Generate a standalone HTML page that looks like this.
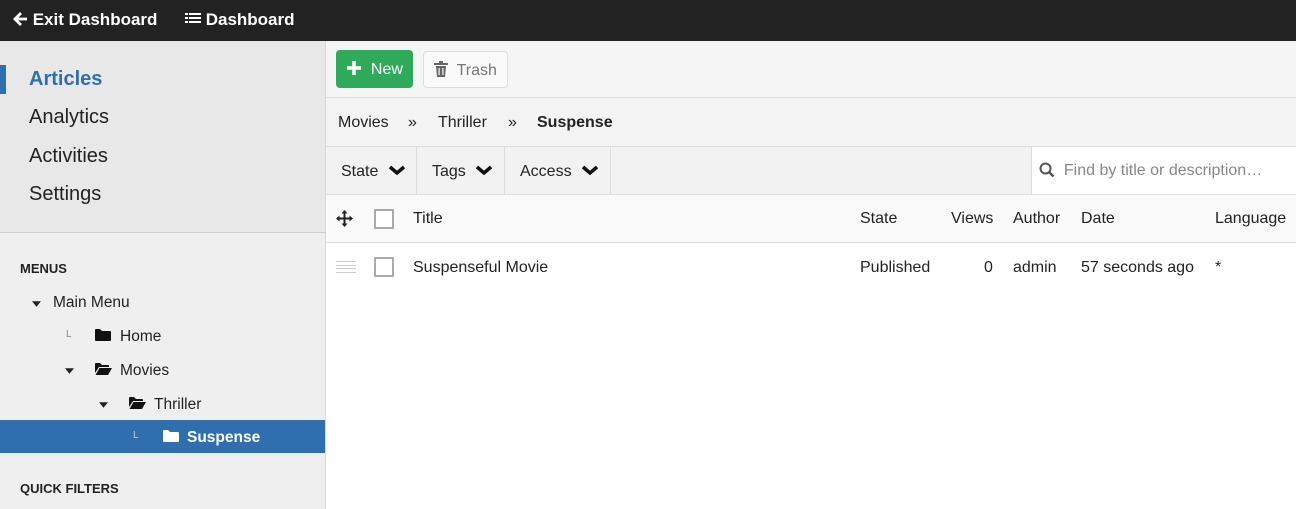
<!DOCTYPE html>
<html><head><style>
*{margin:0;padding:0;box-sizing:border-box}
body{width:1296px;height:509px;overflow:hidden;font-family:"Liberation Sans",Arial,sans-serif;color:#222;background:#fff;position:relative}
.a{position:absolute;white-space:nowrap}
.t{font-size:15.5px}
</style></head><body>
<div class="a" style="left:0;top:0;width:1296px;height:41px;background:#222"></div>
<div class="a" style="left:12px;top:10px;color:#fff;font-weight:bold;font-size:17px">
<svg width="16" height="16" viewBox="0 0 16 16" style="vertical-align:-2px"><path d="M8 1L1 8l7 7 2-2-3.6-3.6H15V6.6H6.4L10 3z" fill="#fff"/></svg> Exit Dashboard</div>
<div class="a" style="left:185px;top:10px;color:#fff;font-weight:bold;font-size:17px">
<svg width="16" height="14" viewBox="0 0 16 14" style="vertical-align:-1px"><g fill="#fff"><rect x="0" y="1" width="3" height="2"/><rect x="4" y="1" width="12" height="2"/><rect x="0" y="5" width="3" height="2"/><rect x="4" y="5" width="12" height="2"/><rect x="0" y="9" width="3" height="2"/><rect x="4" y="9" width="12" height="2"/></g></svg> Dashboard</div>

<svg width="0" height="0" style="position:absolute"><defs>
<symbol id="fc" viewBox="0 0 16 13"><path d="M0 2a1 1 0 0 1 1-1h4l2 2h8a1 1 0 0 1 1 1v8a1 1 0 0 1-1 1H1a1 1 0 0 1-1-1z"/></symbol>
<symbol id="fo" viewBox="0 0 17 13"><path d="M0 2a1 1 0 0 1 1-1h4l2 2h6a1 1 0 0 1 1 1v1H4L0 11zM4.5 6H17l-4 7H0.5z"/></symbol>
<symbol id="tri" viewBox="0 0 10 6"><path d="M0 0h10L5 6z"/></symbol>
</defs></svg>

<!-- sidebar -->
<div class="a" style="left:0;top:41px;width:326px;height:468px;background:#efefef;border-right:1px solid #d8d8d8"></div>
<div class="a" style="left:0;top:41px;width:325px;height:192px;background:#e8e8e8;border-bottom:1px solid #cfcfcf"></div>
<div class="a" style="left:0;top:65px;width:6px;height:29px;background:#2f6fad"></div>
<div class="a" style="left:29px;top:68px;font-size:20px;font-weight:bold;color:#2f6fad">Articles</div>
<div class="a" style="left:29px;top:106px;font-size:20px">Analytics</div>
<div class="a" style="left:29px;top:145px;font-size:20px">Activities</div>
<div class="a" style="left:29px;top:183px;font-size:20px">Settings</div>
<div class="a" style="left:20px;top:261px;font-size:13px;font-weight:bold">MENUS</div>

<svg class="a" style="left:32px;top:301px" width="9" height="6" fill="#222"><use href="#tri"/></svg>
<div class="a t" style="left:53px;top:294px">Main Menu</div>

<div class="a" style="left:66px;top:329px;font-size:10px;color:#888">L</div>
<svg class="a" style="left:95px;top:328px" width="16" height="13" fill="#111"><use href="#fc"/></svg>
<div class="a t" style="left:120px;top:328px">Home</div>

<svg class="a" style="left:65px;top:368px" width="9" height="6" fill="#222"><use href="#tri"/></svg>
<svg class="a" style="left:95px;top:362px" width="17" height="13" fill="#111"><use href="#fo"/></svg>
<div class="a t" style="left:120px;top:362px">Movies</div>

<svg class="a" style="left:99px;top:402px" width="9" height="6" fill="#222"><use href="#tri"/></svg>
<svg class="a" style="left:129px;top:396px" width="17" height="13" fill="#111"><use href="#fo"/></svg>
<div class="a t" style="left:154px;top:396px">Thriller</div>

<div class="a" style="left:0;top:420px;width:325px;height:33px;background:#2f6fad"></div>
<div class="a" style="left:133px;top:430px;font-size:10px;color:#ccd">L</div>
<svg class="a" style="left:163px;top:429px" width="16" height="13" fill="#fff"><use href="#fc"/></svg>
<div class="a t" style="left:187px;top:429px;color:#fff;font-weight:bold">Suspense</div>
<div class="a" style="left:20px;top:481px;font-size:13px;font-weight:bold">QUICK FILTERS</div>

<!-- main -->
<div class="a" style="left:326px;top:41px;width:970px;height:57px;background:#f5f5f5;border-bottom:1px solid #ddd"></div>
<div class="a" style="left:336px;top:50px;width:77px;height:38px;background:#2eaa5a;border-radius:4px;color:#fff;font-size:16px;padding:10px 0 0 10px"><svg width="16" height="16" viewBox="0 0 16 16" style="vertical-align:-2px"><path d="M8 1v14M1 8h14" stroke="#fff" stroke-width="3.5"/></svg>&nbsp; New</div>
<div class="a" style="left:423px;top:51px;width:85px;height:37px;background:#fafafa;border:1px solid #ddd;border-radius:4px;color:#777;font-size:16px;padding:9px 0 0 10px"><svg width="14" height="16" viewBox="0 0 14 16" style="vertical-align:-2px"><g fill="#666"><rect x="5" y="0" width="4" height="2"/><rect x="0" y="2" width="14" height="2"/><path d="M2 5h10l-1 11H3z"/></g><g fill="#fafafa"><rect x="4.5" y="7" width="1.2" height="7"/><rect x="8.3" y="7" width="1.2" height="7"/></g></svg>&nbsp; Trash</div>
<div class="a" style="left:326px;top:98px;width:970px;height:49px;background:#f3f3f3;border-bottom:1px solid #ddd"></div>
<div class="a" style="left:338px;top:114px;font-size:16px">Movies</div>
<div class="a" style="left:408px;top:114px;font-size:16px">»</div>
<div class="a" style="left:438px;top:114px;font-size:16px">Thriller</div>
<div class="a" style="left:508px;top:114px;font-size:16px">»</div>
<div class="a" style="left:537px;top:114px;font-size:16px;font-weight:bold">Suspense</div>
<div class="a" style="left:326px;top:147px;width:970px;height:48px;background:#f2f2f2;border-bottom:1px solid #ddd"></div>
<div class="a" style="left:416px;top:147px;width:1px;height:47px;background:#ddd"></div>
<div class="a" style="left:504px;top:147px;width:1px;height:47px;background:#ddd"></div>
<div class="a" style="left:610px;top:147px;width:1px;height:47px;background:#ddd"></div>
<div class="a" style="left:341px;top:163px;font-size:16px">State <svg width="16" height="12" viewBox="0 0 16 12" style="margin-left:6px"><path d="M1 3l7 6 7-6" stroke="#111" stroke-width="3.5" fill="none"/></svg></div>
<div class="a" style="left:432px;top:163px;font-size:16px">Tags <svg width="16" height="12" viewBox="0 0 16 12" style="margin-left:6px"><path d="M1 3l7 6 7-6" stroke="#111" stroke-width="3.5" fill="none"/></svg></div>
<div class="a" style="left:520px;top:163px;font-size:16px">Access <svg width="16" height="12" viewBox="0 0 16 12" style="margin-left:6px"><path d="M1 3l7 6 7-6" stroke="#111" stroke-width="3.5" fill="none"/></svg></div>
<div class="a" style="left:1031px;top:147px;width:265px;height:47px;background:#fff;border-left:1px solid #ddd"></div>
<div class="a" style="left:1039px;top:162px;font-size:16px;color:#888"><svg width="16" height="16" viewBox="0 0 16 16" style="vertical-align:-3px"><circle cx="6.5" cy="6.5" r="5" stroke="#555" stroke-width="2" fill="none"/><path d="M10 10l4.5 4.5" stroke="#555" stroke-width="2.5"/></svg>&nbsp; Find by title or description…</div>
<div class="a" style="left:326px;top:195px;width:970px;height:48px;background:#fafafa;border-bottom:1px solid #ddd"></div>
<svg class="a" style="left:336px;top:210px" width="17" height="17" viewBox="0 0 17 17"><g fill="#222"><path d="M8.5 0l3 3.5h-6zM8.5 17l3-3.5h-6zM0 8.5l3.5-3v6zM17 8.5l-3.5-3v6z"/><rect x="7.5" y="3" width="2" height="11"/><rect x="3" y="7.5" width="11" height="2"/></g></svg>
<div class="a" style="left:374px;top:209px;width:20px;height:20px;border:2px solid #aaa;background:#fff"></div>
<div class="a" style="left:413px;top:210px;font-size:16px">Title</div>
<div class="a" style="left:860px;top:210px;font-size:16px">State</div>
<div class="a" style="left:951px;top:210px;font-size:16px">Views</div>
<div class="a" style="left:1013px;top:210px;font-size:16px">Author</div>
<div class="a" style="left:1081px;top:210px;font-size:16px">Date</div>
<div class="a" style="left:1215px;top:210px;font-size:16px">Language</div>
<div class="a" style="left:336px;top:261px;width:20px;height:12px;border-top:1px solid #ccc;border-bottom:1px solid #ccc"></div>
<div class="a" style="left:336px;top:265px;width:20px;height:4px;border-top:1px solid #ccc;border-bottom:1px solid #ccc"></div>
<div class="a" style="left:374px;top:257px;width:20px;height:20px;border:2px solid #aaa;background:#fff"></div>
<div class="a" style="left:413px;top:259px;font-size:16px">Suspenseful Movie</div>
<div class="a" style="left:860px;top:259px;font-size:16px">Published</div>
<div class="a" style="left:984px;top:259px;font-size:16px">0</div>
<div class="a" style="left:1013px;top:259px;font-size:16px">admin</div>
<div class="a" style="left:1081px;top:259px;font-size:16px">57 seconds ago</div>
<div class="a" style="left:1215px;top:259px;font-size:16px">*</div>
</body></html>
